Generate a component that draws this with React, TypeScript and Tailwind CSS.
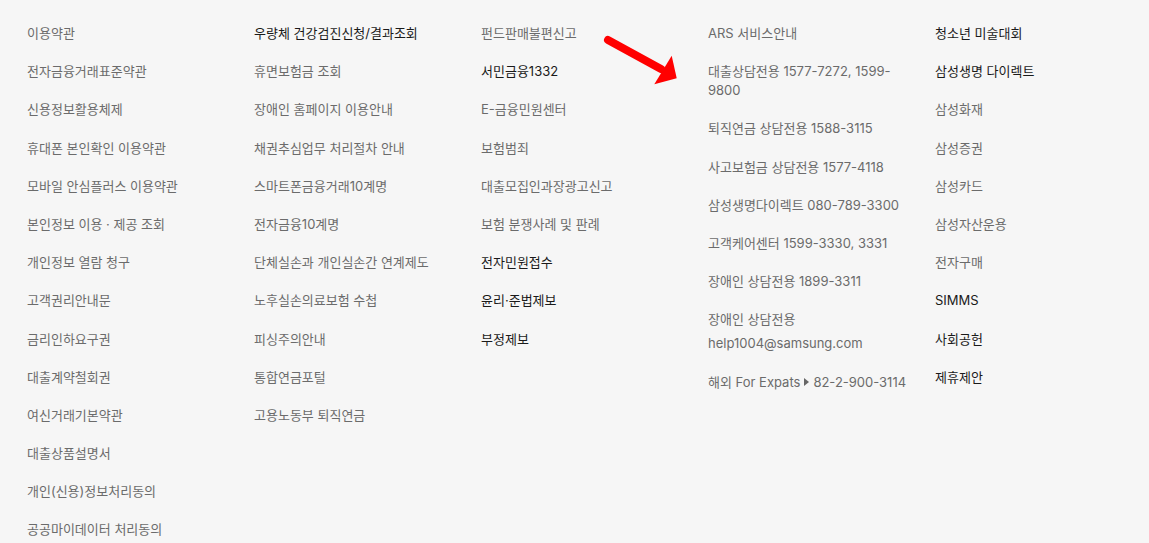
import React from "react";

type Item = {
  label: React.ReactNode;
  strong?: boolean;
};

const COLUMNS: Item[][] = [
  [
    { label: "이용약관" },
    { label: "전자금융거래표준약관" },
    { label: "신용정보활용체제" },
    { label: "휴대폰 본인확인 이용약관" },
    { label: "모바일 안심플러스 이용약관" },
    { label: "본인정보 이용 · 제공 조회" },
    { label: "개인정보 열람 청구" },
    { label: "고객권리안내문" },
    { label: "금리인하요구권" },
    { label: "대출계약철회권" },
    { label: "여신거래기본약관" },
    { label: "대출상품설명서" },
    { label: "개인(신용)정보처리동의" },
    { label: "공공마이데이터 처리동의" },
  ],
  [
    { label: "우량체 건강검진신청/결과조회", strong: true },
    { label: "휴면보험금 조회" },
    { label: "장애인 홈페이지 이용안내" },
    { label: "채권추심업무 처리절차 안내" },
    { label: "스마트폰금융거래10계명" },
    { label: "전자금융10계명" },
    { label: "단체실손과 개인실손간 연계제도" },
    { label: "노후실손의료보험 수첩" },
    { label: "피싱주의안내" },
    { label: "통합연금포털" },
    { label: "고용노동부 퇴직연금" },
  ],
  [
    { label: "펀드판매불편신고" },
    { label: "서민금융1332", strong: true },
    { label: "E-금융민원센터" },
    { label: "보험범죄" },
    { label: "대출모집인과장광고신고" },
    { label: "보험 분쟁사례 및 판례" },
    { label: "전자민원접수", strong: true },
    { label: "윤리·준법제보", strong: true },
    { label: "부정제보", strong: true },
  ],
  [
    { label: "ARS 서비스안내" },
    { label: "대출상담전용 1577-7272, 1599-9800" },
    { label: "퇴직연금 상담전용 1588-3115" },
    { label: "사고보험금 상담전용 1577-4118" },
    { label: "삼성생명다이렉트 080-789-3300" },
    { label: "고객케어센터 1599-3330, 3331" },
    { label: "장애인 상담전용 1899-3311" },
    {
      label: (
        <>
          <span className="block">장애인 상담전용</span>
          <span className="mt-[5px] block">help1004@samsung.com</span>
        </>
      ),
    },
    {
      label: (
        <span className="inline-flex items-center">
          해외 For Expats
          <svg width="5" height="8" viewBox="0 0 5 8" className="mx-[4px]">
            <path d="M0 0 L5 4 L0 8 Z" fill="#666666" />
          </svg>
          82-2-900-3114
        </span>
      ),
    },
  ],
  [
    { label: "청소년 미술대회", strong: true },
    { label: "삼성생명 다이렉트", strong: true },
    { label: "삼성화재" },
    { label: "삼성증권" },
    { label: "삼성카드" },
    { label: "삼성자산운용" },
    { label: "전자구매" },
    { label: "SIMMS", strong: true },
    { label: "사회공헌", strong: true },
    { label: "제휴제안", strong: true },
  ],
];

function RedArrow() {
  return (
    <svg
      className="pointer-events-none absolute left-[595px] top-[25px]"
      width="95"
      height="70"
      viewBox="0 0 95 70"
    >
      <line x1="13" y1="15" x2="66" y2="44" stroke="#ff0000" strokeWidth="8" strokeLinecap="round" />
      <polygon points="76.7,30.7 81.7,53.3 59.3,59.3" fill="#ff0000" />
    </svg>
  );
}

export default function App() {
  return (
    <div
      className="relative h-[543px] w-full overflow-hidden bg-[#f6f6f6]"
      style={{ fontFamily: 'Inter, "Noto Sans CJK KR", sans-serif' }}
    >
      <div className="grid grid-cols-[repeat(5,227px)] pl-[27px] pt-[24px]">
        {COLUMNS.map((col, ci) => (
          <ul key={ci} className="flex flex-col gap-[19.2px] pr-[22px]">
            {col.map((item, ii) => (
              <li
                key={ii}
                className={
                  "text-[13px] leading-[19px] " +
                  (item.strong ? "text-[#1a1a1a]" : "text-[#6b6b6b]")
                }
              >
                {item.label}
              </li>
            ))}
          </ul>
        ))}
      </div>
      <RedArrow />
    </div>
  );
}
